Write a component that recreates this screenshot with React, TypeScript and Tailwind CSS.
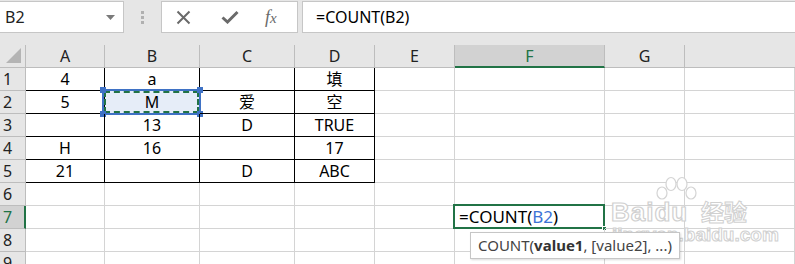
import React from "react";

const FONT = '"Noto Sans", "Noto Sans CJK SC", sans-serif';

const cols = ["A", "B", "C", "D", "E", "F", "G", ""];
const widths = ["w-[79px]", "w-[95px]", "w-[95px]", "w-[80px]", "w-[80px]", "w-[150px]", "w-[80px]", "flex-1"];

const data: string[][] = [
  ["4", "a", "", "填"],
  ["5", "M", "爱", "空"],
  ["", "13", "D", "TRUE"],
  ["H", "16", "", "17"],
  ["21", "", "D", "ABC"],
];

function Cell({ r, c }: { r: number; c: number }) {
  const inTable = r < 5 && c < 4;
  const text = inTable ? data[r][c] : "";
  const border = inTable ? "border-black" : "border-[#d4d4d4]";
  const isSel = r === 1 && c === 1;
  const isF7 = r === 6 && c === 5;
  return (
    <div
      className={`${widths[c]} shrink-0 h-[23px] border-r border-b ${border} relative flex items-center justify-center text-[16px] text-black ${isSel ? "bg-[#e6edf8]" : ""}`}
    >
      {text}
      {isSel && (
        <>
          <div className="absolute left-[-3px] top-[-2px] right-[-2px] bottom-[-2px] border-2 border-[#3f72c5]" />
          <div className="absolute left-[-1px] top-0 right-0 bottom-0 border-2 border-dashed border-[#217346]" />
          <div className="absolute left-[-5px] top-[-4px] w-[6px] h-[6px] bg-[#3f72c5]" />
          <div className="absolute right-[-4px] top-[-4px] w-[6px] h-[6px] bg-[#3f72c5]" />
          <div className="absolute left-[-5px] bottom-[-4px] w-[6px] h-[6px] bg-[#3f72c5]" />
          <div className="absolute right-[-4px] bottom-[-4px] w-[6px] h-[6px] bg-[#3f72c5]" />
        </>
      )}
      {isF7 && (
        <>
          <div className="absolute left-[-2px] top-[-2px] right-[-1px] bottom-[-1px] border-2 border-[#217346] flex items-center pl-[4px] text-[17px] leading-none">
            <span className="text-black">=COUNT(</span>
            <span className="text-[#3b73d6]">B2</span>
            <span className="text-black">)</span>
          </div>
          <div className="absolute right-[-3px] bottom-[-3px] w-[5px] h-[5px] bg-[#217346] border border-white" />
        </>
      )}
    </div>
  );
}

export default function App() {
  return (
    <div className="relative w-[795px] h-[264px] overflow-hidden bg-white" style={{ fontFamily: FONT }}>
      {/* toolbar */}
      <div className="h-[45px] bg-[#e6e6e6] pt-[1px]">
        <div className="flex h-[32px] items-stretch">
          <div className="ml-[-1px] w-[125px] bg-white border border-[#c6c6c6] flex items-center justify-between pl-[5px] pr-[8px] text-[16px] text-[#222]">
            <span>B2</span>
            <svg width="9" height="5" viewBox="0 0 9 5"><path d="M0 0h9L4.5 5z" fill="#7a7a7a" /></svg>
          </div>
          <div className="w-[37px] flex flex-col items-center justify-center gap-[2px]">
            <div className="w-[3px] h-[3px] bg-[#b0b0b0]" />
            <div className="w-[3px] h-[3px] bg-[#b0b0b0]" />
            <div className="w-[3px] h-[3px] bg-[#b0b0b0]" />
          </div>
          <div className="w-[137px] bg-white border border-[#c6c6c6] flex items-center">
            <svg className="ml-[14px]" width="15" height="15" viewBox="0 0 15 15">
              <path d="M1.5 1.5l12 12M13.5 1.5l-12 12" stroke="#6a6a6a" strokeWidth="2" />
            </svg>
            <svg className="ml-[30px]" width="18" height="14" viewBox="0 0 18 14">
              <path d="M1.5 7.5l5 4.5L16.5 2" stroke="#6a6a6a" strokeWidth="3" fill="none" />
            </svg>
            <span className="ml-[26px] text-[18px] italic text-[#6a6a6a] leading-none" style={{ fontFamily: '"Liberation Serif", serif' }}>
              f<span className="text-[15px]">x</span>
            </span>
          </div>
          <div className="ml-[4px] flex-1 bg-white border border-[#c6c6c6] border-r-0 flex items-center pl-[13px] text-[16px] text-black">
            =COUNT(B2)
          </div>
        </div>
      </div>

      {/* column headers */}
      <div className="flex h-[23px] bg-[#e6e6e6]">
        <div className="w-[26px] shrink-0 border-r border-b border-[#bdbdbd] relative">
          <svg className="absolute left-[6px] top-[3px]" width="15" height="15" viewBox="0 0 15 15">
            <path d="M15 0V15H0z" fill="#b4b4b4" />
          </svg>
        </div>
        {cols.map((c, i) => (
          <div
            key={i}
            className={`${widths[i]} shrink-0 border-r flex items-center justify-center text-[16px] ${
              c === "F"
                ? "bg-[#d2d2d2] border-[#bdbdbd] border-b-2 border-b-[#217346] text-[#217346]"
                : "border-b border-[#bdbdbd] text-[#222]"
            } ${i === 7 ? "border-r-0" : ""}`}
          >
            {c}
          </div>
        ))}
      </div>

      {/* rows */}
      {Array.from({ length: 9 }).map((_, r) => (
        <div key={r} className="flex">
          <div
            className={`w-[26px] shrink-0 h-[23px] border-b border-[#bdbdbd] flex items-center pl-[3px] text-[16px] ${
              r === 6
                ? "bg-[#d2d2d2] border-r-2 border-r-[#217346] text-[#217346]"
                : "bg-[#e6e6e6] border-r text-[#222]"
            }`}
          >
            {r + 1}
          </div>
          {cols.map((_, c) => (
            <Cell key={c} r={r} c={c} />
          ))}
        </div>
      ))}

      {/* watermark */}
      <svg className="absolute left-[654px] top-[176px] pointer-events-none" width="44" height="32" viewBox="0 0 44 32">
        <g fill="white" stroke="#d4d4d4" strokeWidth="1.2">
          <ellipse cx="8" cy="17" rx="5" ry="6" />
          <ellipse cx="17" cy="8" rx="5" ry="6.5" />
          <ellipse cx="28" cy="8" rx="5" ry="6.5" />
          <ellipse cx="37" cy="17" rx="5" ry="6" />
        </g>
      </svg>
      <div
        className="absolute left-[611px] top-[199px] pointer-events-none text-white [-webkit-text-stroke:1.2px_#d0d0d0] text-[26px] font-bold leading-none tracking-[1px]"
        style={{ fontFamily: '"Liberation Sans", sans-serif' }}
      >
        Baidu
      </div>
      <div
        className="absolute left-[701px] top-[200px] pointer-events-none text-white [-webkit-text-stroke:1px_#d0d0d0] text-[23px] font-bold leading-none"
        style={{ fontFamily: '"Noto Sans CJK SC", sans-serif' }}
      >
        经验
      </div>
      <div
        className="absolute left-[612px] top-[225px] pointer-events-none text-white [-webkit-text-stroke:1px_#d0d0d0] text-[19px] font-bold leading-none"
        style={{ fontFamily: '"Liberation Sans", sans-serif' }}
      >
        jingyan.baidu.com
      </div>

      {/* tooltip */}
      <div className="absolute left-[470px] top-[232px] h-[27px] px-[7px] bg-white border border-[#c6c6c6] shadow-[1px_1px_2px_rgba(0,0,0,0.15)] flex items-center text-[15px] text-[#444] whitespace-nowrap">
        COUNT(<span className="font-bold text-[#333]">value1</span>, [value2], ...)
      </div>
    </div>
  );
}
